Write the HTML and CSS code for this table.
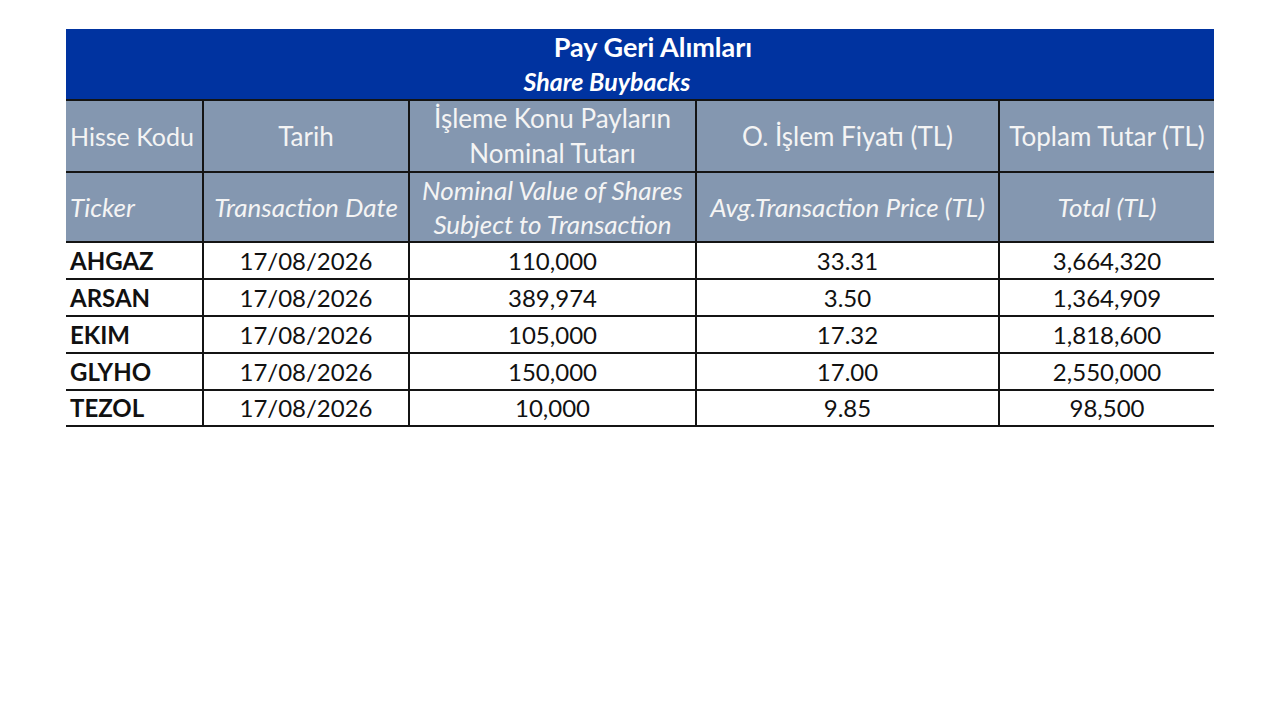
FILE: index.html
```html
<!DOCTYPE html>
<html lang="tr">
<head>
<meta charset="utf-8">
<title>Pay Geri Alımları</title>
<link rel="stylesheet" href="styles.css">
</head>
<body>
<main class="page">
  <table class="buybacks">
    <colgroup>
      <col class="c1"><col class="c2"><col class="c3"><col class="c4"><col class="c5">
    </colgroup>
    <thead>
      <tr class="title-row">
        <th colspan="5">
          <div class="title">Pay Geri Alımları</div>
          <div class="subtitle">Share Buybacks</div>
        </th>
      </tr>
      <tr class="head-tr">
        <th class="left">Hisse Kodu</th>
        <th>Tarih</th>
        <th>İşleme Konu Payların<br>Nominal Tutarı</th>
        <th>O. İşlem Fiyatı (TL)</th>
        <th>Toplam Tutar (TL)</th>
      </tr>
      <tr class="head-en">
        <th class="left">Ticker</th>
        <th>Transaction Date</th>
        <th>Nominal Value of Shares<br>Subject to Transaction</th>
        <th>Avg.Transaction Price (TL)</th>
        <th>Total (TL)</th>
      </tr>
    </thead>
    <tbody>
      <tr><td class="ticker">AHGAZ</td><td>17/08/2026</td><td>110,000</td><td>33.31</td><td>3,664,320</td></tr>
      <tr><td class="ticker">ARSAN</td><td>17/08/2026</td><td>389,974</td><td>3.50</td><td>1,364,909</td></tr>
      <tr><td class="ticker">EKIM</td><td>17/08/2026</td><td>105,000</td><td>17.32</td><td>1,818,600</td></tr>
      <tr><td class="ticker">GLYHO</td><td>17/08/2026</td><td>150,000</td><td>17.00</td><td>2,550,000</td></tr>
      <tr><td class="ticker">TEZOL</td><td>17/08/2026</td><td>10,000</td><td>9.85</td><td>98,500</td></tr>
    </tbody>
  </table>
</main>
</body>
</html>
```

FILE: styles.css
```css
html, body {
  margin: 0;
  padding: 0;
  background: #ffffff;
}

.page {
  padding: 29px 0 0 66px;
  font-family: Lato, "Open Sans", "DejaVu Sans", sans-serif;
}

.buybacks {
  border-collapse: collapse;
  table-layout: fixed;
  width: 1148px;
}

.c1 { width: 137px; }
.c2 { width: 206px; }
.c3 { width: 287px; }
.c4 { width: 303px; }
.c5 { width: 215px; }

.buybacks th,
.buybacks td {
  padding: 0;
  text-align: center;
  vertical-align: middle;
  border: 2px solid #141414;
  white-space: nowrap;
}

.buybacks tr > :first-child { border-left: none; }
.buybacks tr > :last-child { border-right: none; }

.title-row th {
  background: #0033a0;
  color: #ffffff;
  height: 70px;
  border-top: none;
  font-weight: 700;
}

.title {
  font-size: 27px;
  line-height: 34px;
  padding-left: 26px;
}

.subtitle {
  font-size: 25px;
  line-height: 34px;
  font-style: italic;
  padding-right: 66px;
}

.head-tr th,
.head-en th {
  background: #8497b0;
  color: #f4f4f4;
  font-weight: 400;
  font-size: 26px;
}

.head-tr .left { font-size: 25px; }

.head-tr th { height: 70px; line-height: 35px; }
.head-en th { height: 68px; line-height: 34px; font-style: italic; font-size: 26px; }

.buybacks .left {
  text-align: left;
  padding-left: 4px;
}

.buybacks td {
  height: 35px;
  font-size: 24px;
  color: #111111;
  line-height: 35px;
}

.buybacks tbody tr:last-child td { height: 34px; line-height: 34px; }

.buybacks td.ticker {
  text-align: left;
  padding-left: 4px;
  font-weight: 700;
  font-size: 24px;
}
```
